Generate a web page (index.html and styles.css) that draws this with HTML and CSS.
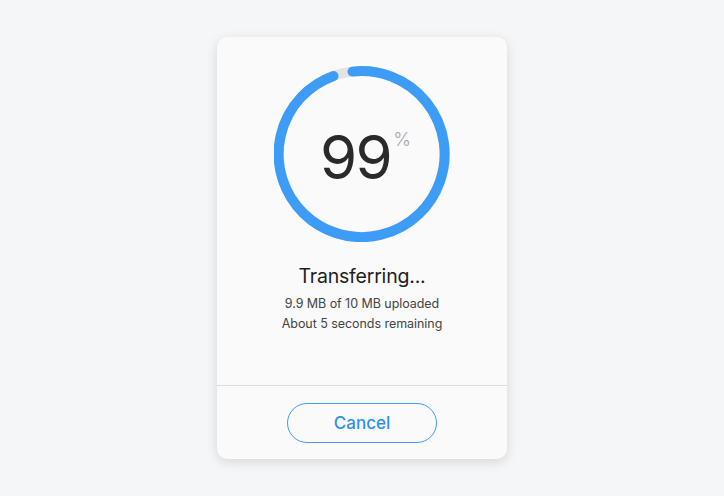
FILE: index.html
```html
<!DOCTYPE html>
<html>
<head>
<meta charset="utf-8">
<link rel="stylesheet" href="styles.css">
</head>
<body>
<div class="card">
  <div class="main">
    <div class="ring">
      <svg class="ring-svg" width="176" height="176" viewBox="0 0 176 176">
        <circle cx="88" cy="88" r="83" fill="none" stroke="#e2e3e5" stroke-width="10"/>
        <path d="M78.5 5.6 A83 83 0 1 1 59.5 10.0" fill="none" stroke="#3d9cf6" stroke-width="10" stroke-linecap="round"/>
      </svg>
      <div class="value"><span class="num">99</span><span class="pct">%</span></div>
    </div>
    <div class="title">Transferring...</div>
    <div class="sub">9.9 MB of 10 MB uploaded</div>
    <div class="sub">About 5 seconds remaining</div>
  </div>
  <div class="footer">
    <button class="cancel">Cancel</button>
  </div>
</div>
</body>
</html>
```
FILE: styles.css
```css
html, body {
  margin: 0;
  padding: 0;
  height: 100%;
}
body {
  background: #f5f6f7;
  font-family: "Inter", "Liberation Sans", sans-serif;
  display: flex;
  align-items: center;
  justify-content: center;
}
.card {
  width: 290px;
  height: 422px;
  background: #fafafa;
  border-radius: 10px;
  box-shadow: 0 3px 12px rgba(0, 0, 0, 0.13);
  display: flex;
  flex-direction: column;
  overflow: hidden;
}
.main {
  display: flex;
  flex-direction: column;
  align-items: center;
  padding-top: 29px;
  height: 349px;
  box-sizing: border-box;
  border-bottom: 1px solid #dcdcdc;
}
.ring {
  position: relative;
  width: 176px;
  height: 176px;
}
.ring-svg {
  display: block;
}
.value {
  position: absolute;
  inset: 0;
  display: flex;
  align-items: flex-start;
  justify-content: center;
}
.num {
  font-size: 60px;
  font-weight: 400;
  color: #2a2a2a;
  letter-spacing: -1.5px;
  line-height: 60px;
  margin-top: 61px;
  margin-left: 7px;
}
.pct {
  font-size: 19px;
  font-weight: 300;
  color: #a9a9a9;
  line-height: 19px;
  margin-top: 64px;
  margin-left: 2px;
}
.title {
  margin-top: 22px;
  font-size: 19.5px;
  letter-spacing: -0.2px;
  line-height: 24px;
  color: #1e1e1e;
  margin-bottom: 6px;
}
.sub {
  font-size: 12.5px;
  letter-spacing: -0.05px;
  line-height: 20px;
  color: #444;
}
.footer {
  flex: 1;
  display: flex;
  justify-content: center;
  padding-top: 17px;
}
.cancel {
  width: 150px;
  height: 40px;
  border: 1.5px solid #3d9cf6;
  border-radius: 20px;
  background: transparent;
  color: #2f8ff0;
  font-family: "Inter", "Liberation Sans", sans-serif;
  font-size: 17px;
  font-weight: 500;
  cursor: pointer;
}
```
